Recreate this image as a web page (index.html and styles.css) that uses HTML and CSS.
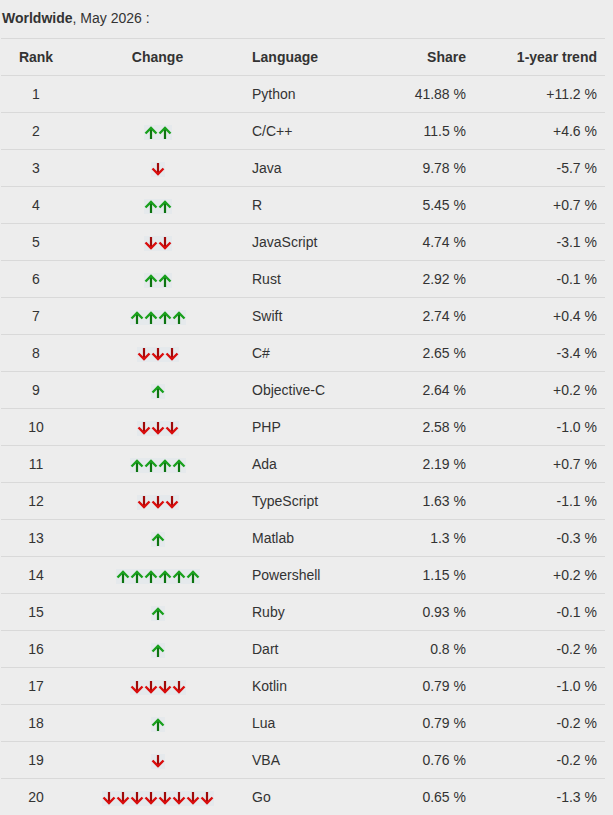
FILE: index.html
```html
<!DOCTYPE html>
<html>
<head>
<meta charset="utf-8">
<link rel="stylesheet" href="styles.css">
</head>
<body>
<svg width="0" height="0" class="defs">
  <defs>
    <symbol id="up" viewBox="0 0 14 15">
      <rect width="14" height="15" fill="#e5e9ec"/>
      <path d="M7 2.5 V14" stroke="#0d7411" stroke-width="2.2" fill="none"/>
      <path d="M1.5 8.5 L7 3 L12.5 8.5" stroke="#19a01d" stroke-width="2.4" fill="none" stroke-linejoin="miter"/>
    </symbol>
    <symbol id="down" viewBox="0 0 14 15">
      <rect width="14" height="15" fill="#e5e9ec"/>
      <path d="M7 1 V12.5" stroke="#a00a0a" stroke-width="2.2" fill="none"/>
      <path d="M1.5 6.5 L7 12 L12.5 6.5" stroke="#d90d0d" stroke-width="2.4" fill="none" stroke-linejoin="miter"/>
    </symbol>
  </defs>
</svg>
<div class="title"><b>Worldwide</b>, May 2026 :</div>
<table class="rank-table">
  <thead>
    <tr><th class="c-rank">Rank</th><th class="c-change">Change</th><th class="c-lang">Language</th><th class="c-share">Share</th><th class="c-trend">1-year trend</th></tr>
  </thead>
  <tbody id="rows"></tbody>
</table>
<script src="app.js"></script>
</body>
</html>
```
FILE: app.js
```js
const data = [
  [1, 0, "Python", "41.88 %", "+11.2 %"],
  [2, 2, "C/C++", "11.5 %", "+4.6 %"],
  [3, -1, "Java", "9.78 %", "-5.7 %"],
  [4, 2, "R", "5.45 %", "+0.7 %"],
  [5, -2, "JavaScript", "4.74 %", "-3.1 %"],
  [6, 2, "Rust", "2.92 %", "-0.1 %"],
  [7, 4, "Swift", "2.74 %", "+0.4 %"],
  [8, -3, "C#", "2.65 %", "-3.4 %"],
  [9, 1, "Objective-C", "2.64 %", "+0.2 %"],
  [10, -3, "PHP", "2.58 %", "-1.0 %"],
  [11, 4, "Ada", "2.19 %", "+0.7 %"],
  [12, -3, "TypeScript", "1.63 %", "-1.1 %"],
  [13, 1, "Matlab", "1.3 %", "-0.3 %"],
  [14, 6, "Powershell", "1.15 %", "+0.2 %"],
  [15, 1, "Ruby", "0.93 %", "-0.1 %"],
  [16, 1, "Dart", "0.8 %", "-0.2 %"],
  [17, -4, "Kotlin", "0.79 %", "-1.0 %"],
  [18, 1, "Lua", "0.79 %", "-0.2 %"],
  [19, -1, "VBA", "0.76 %", "-0.2 %"],
  [20, -8, "Go", "0.65 %", "-1.3 %"]
];
const tbody = document.getElementById("rows");
tbody.innerHTML = data.map(([r, c, l, s, t]) => {
  const id = c > 0 ? "up" : "down";
  const icons = Array.from({length: Math.abs(c)}, () =>
    `<svg class="arrow" width="14" height="15"><use href="#${id}"/></svg>`).join("");
  return `<tr><td class="c-rank">${r}</td><td class="c-change"><span class="arrows">${icons}</span></td><td class="c-lang">${l}</td><td class="c-share">${s}</td><td class="c-trend">${t}</td></tr>`;
}).join("");
```
FILE: styles.css
```css
html, body {
  margin: 0;
  padding: 0;
  background: #ededed;
}
body {
  font-family: "Liberation Sans", Arial, sans-serif;
  font-size: 14px;
  color: #333;
  padding: 0 8px 0 1px;
}
.defs {
  position: absolute;
}
.title {
  padding: 8px 0 0 1px;
  line-height: 20px;
  height: 30px;
  box-sizing: border-box;
  margin-bottom: 8px;
}
.rank-table {
  width: 604px;
  border-collapse: collapse;
  border-spacing: 0;
}
.rank-table th,
.rank-table td {
  height: 36px;
  padding: 0 8px;
  border-top: 1px solid #d9d9d9;
  vertical-align: middle;
  line-height: 20px;
}
.rank-table th {
  font-weight: bold;
}
.c-rank {
  width: 54px;
  text-align: center;
}
.c-change {
  width: 157px;
  text-align: center;
}
.c-lang {
  text-align: left;
}
.c-share {
  width: 90px;
  text-align: right;
}
.c-trend {
  width: 115px;
  text-align: right;
}
.arrows {
  display: inline-flex;
  vertical-align: middle;
  padding-top: 1px;
}
.arrow {
  display: block;
}
```
